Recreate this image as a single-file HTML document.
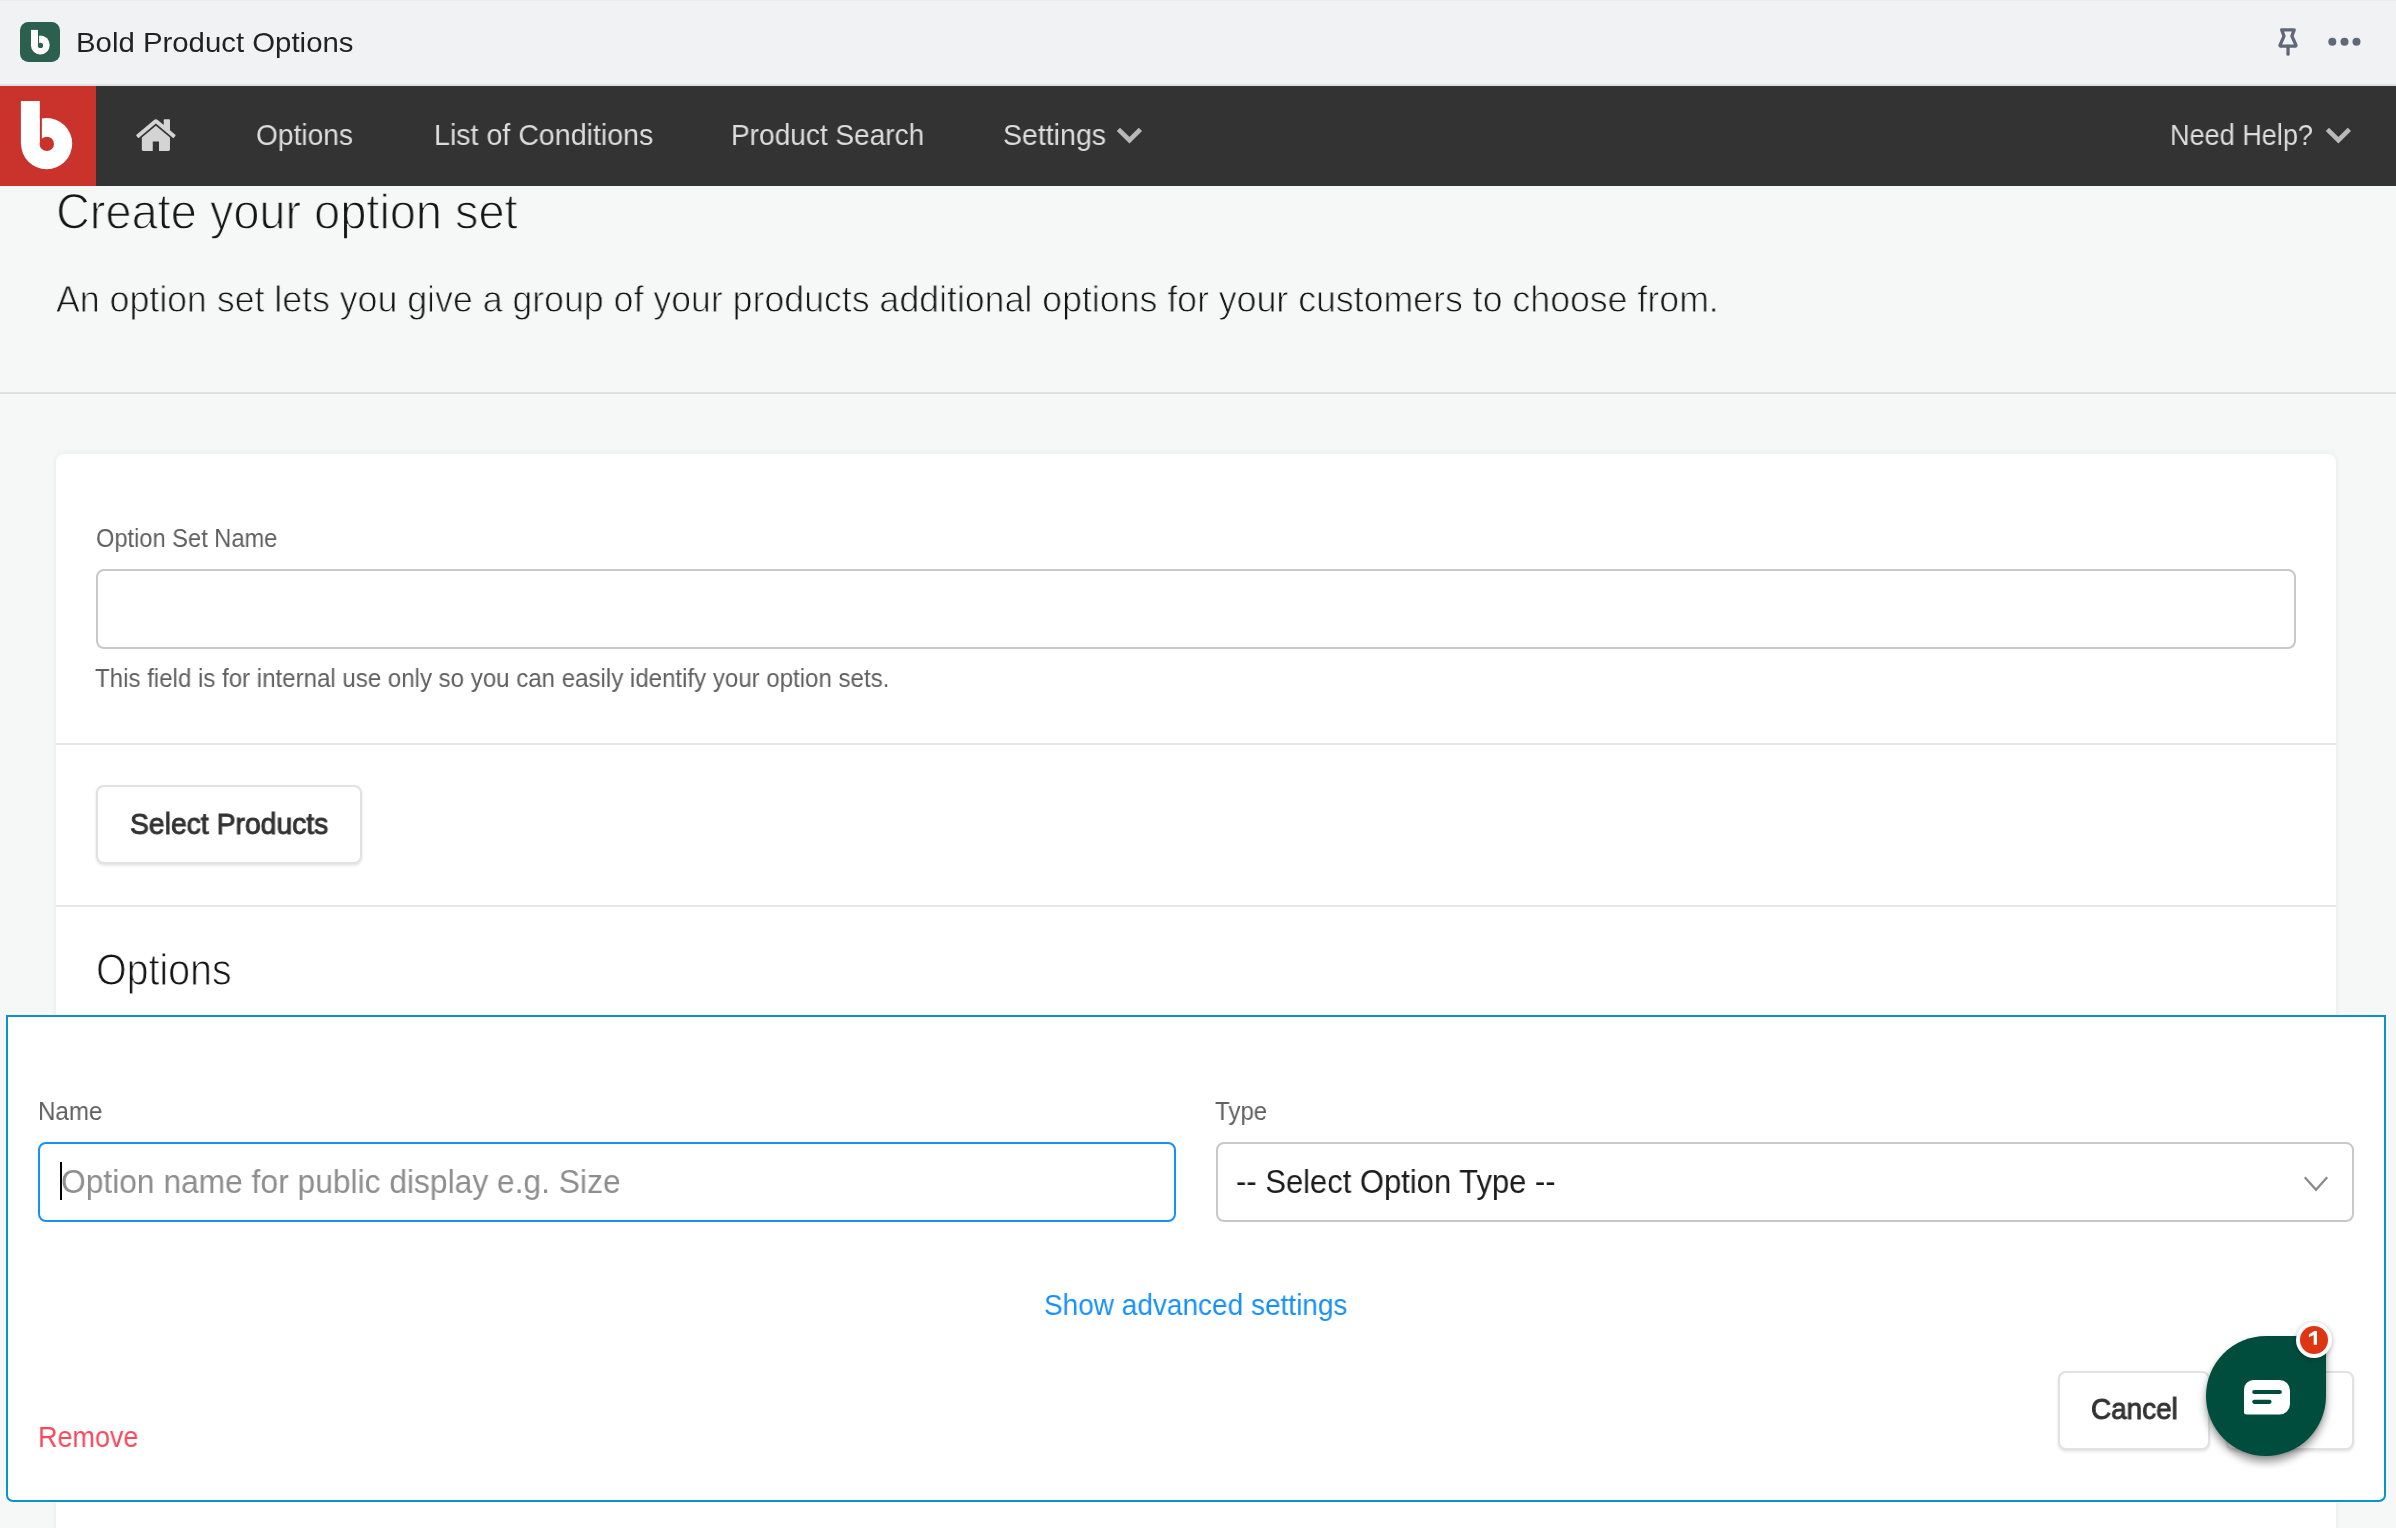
<!DOCTYPE html>
<html lang="en">
<head>
<meta charset="utf-8">
<title>Bold Product Options</title>
<style>
*{box-sizing:border-box;margin:0;padding:0}
html,body{width:2396px;height:1528px;overflow:hidden}
body{position:relative;background:#f6f8f8;font-family:"Liberation Sans",sans-serif;color:#212121}
.abs{position:absolute}
.t{position:absolute;white-space:nowrap;line-height:1;transform-origin:0 0;will-change:transform}
#topbar{left:0;top:0;width:2396px;height:86px;background:#f1f2f4}
#topline{left:0;top:0;width:2396px;height:1px;background:#e9eaec}
#appicon{left:20px;top:22px;width:40px;height:40px}
#nav{left:0;top:86px;width:2396px;height:100px;background:#333333}
#logo{left:0;top:86px;width:96px;height:100px;background:#c9332b}
.navt{color:#dcdcdc;font-size:27.5px;top:124px}
#hr1{left:0;top:392px;width:2396px;height:2px;background:#dde0e0}
#hr1b{left:0;top:394px;width:2396px;height:1px;background:#fbfcfc}
#card{left:56px;top:454px;width:2280px;height:1100px;background:#fff;border-radius:8px;box-shadow:0 0 6px rgba(0,0,0,.07)}
.lbl{color:#606060;font-size:23.5px}
#in1{left:96px;top:569px;width:2200px;height:80px;border:2px solid #c8c8c8;border-radius:8px;background:#fff}
.div{left:56px;width:2280px;height:2px;background:#e6e6e6}
.btn{background:#fff;border:2px solid #e2e2e2;border-radius:8px;box-shadow:0 2px 3px rgba(0,0,0,.09),0 0 2px rgba(0,0,0,.05)}
.btnt{color:#333;font-size:27.5px;-webkit-text-stroke:0.95px #333}
#panel{left:6px;top:1015px;width:2380px;height:487px;background:#fff;border:2px solid #0993ca;border-radius:0 0 7px 7px}
#in2{left:38px;top:1142px;width:1138px;height:80px;border:2px solid #1890f5;border-radius:8px;background:#fff}
#sel{left:1216px;top:1142px;width:1138px;height:80px;border:2px solid #c8c8c8;border-radius:8px;background:#fff}
#caret{left:60px;top:1162px;width:2px;height:38px;background:#000}
#chat{left:2206px;top:1336px;width:120px;height:120px;background:#004d3d;border-radius:60px 14px 60px 60px;box-shadow:0 6px 8px rgba(0,0,0,.40),0 1px 3px rgba(0,0,0,.12)}
#badge{left:2295.500px;top:1321.800px;width:36.600px;height:36.600px;border-radius:50%;background:#fff;box-shadow:0 1px 5px rgba(0,0,0,.30)}
#badge i{position:absolute;left:4.100px;top:4.100px;width:28.400px;height:28.400px;border-radius:50%;background:#de3612}
</style>
</head>
<body>
<!-- top app bar -->
<div id="topbar" class="abs"></div>
<div id="topline" class="abs"></div>
<div class="abs" style="left:0;top:84px;width:2396px;height:2px;background:#e0e1e5"></div>
<svg id="appicon" class="abs" viewBox="0 0 40 40" style="overflow:visible">
  <rect width="40" height="40" rx="8.300" fill="#2b5f4e"/>
  <circle cx="20.3" cy="23" r="9.4" fill="#fff"/>
  <rect x="11" y="7.9" width="7" height="15.5" fill="#fff"/>
  <rect x="18" y="7" width="1.1" height="16.5" fill="#2b5f4e"/>
  <circle cx="20.5" cy="23.4" r="2.6" fill="#2b5f4e"/>
</svg>
<span class="t" id="t_app" style="left:75.70px;top:28.55px;font-size:28.0px;transform:scaleX(1.0487);color:#1f2124">Bold Product Options</span>
<!-- pin -->
<svg class="abs" style="left:2274px;top:26px;width:28px;height:32px" viewBox="0 0 28 32">
  <path d="M7.700 3.850H20.200L17.900 10.100L21.600 18.300Q22.700 20.200 20.300 20.200H7.700Q5.300 20.200 6.400 18.300L10 10.100Z" fill="none" stroke="#5f6877" stroke-width="3.300" stroke-linejoin="round" stroke-linecap="round"/>
  <path d="M14.030 20.200V28.200" fill="none" stroke="#5f6877" stroke-width="3.300" stroke-linecap="round"/>
</svg>
<svg class="abs" style="left:2324.600px;top:34px;width:40px;height:16px" viewBox="0 0 40 16">
  <circle cx="7.300" cy="7.700" r="4" fill="#5f6877"/><circle cx="19.500" cy="7.700" r="4" fill="#5f6877"/><circle cx="31.500" cy="7.700" r="4" fill="#5f6877"/>
</svg>

<!-- nav -->
<div id="nav" class="abs"></div>
<div id="logo" class="abs"></div>
<svg class="abs" style="left:0;top:86px;width:96px;height:100px" viewBox="0 0 96 100">
  <circle cx="46.6" cy="57.6" r="25.6" fill="#fff"/>
  <rect x="20.9" y="15" width="19" height="43" fill="#fff"/>
  <rect x="39.9" y="14" width="2" height="44" fill="#c9332b"/>
  <circle cx="46.8" cy="57.9" r="7.2" fill="#c9332b"/>
</svg>
<svg class="abs" style="left:134.330px;top:112.650px;width:43.790px;height:44.380px" preserveAspectRatio="none" viewBox="0 0 1792 1792">
  <path fill="#d4d4d4" d="M1472 992v480q0 26-19 45t-45 19h-384v-384h-256v384h-384q-26 0-45-19t-19-45v-480q0-1 .5-3t.5-3l575-474 575 474q1 2 1 6zm223-69l-62 74q-8 9-21 11h-3q-13 0-21-7l-692-577-692 577q-12 8-24 7-13-2-21-11l-62-74q-8-10-7-23.500t11-21.500l719-599q32-26 76-26t76 26l244 204v-195q0-14 9-23t23-9h192q14 0 23 9t9 23v408l219 182q10 8 11 21.500t-7 23.500z"/>
</svg>
<span class="t navt" id="n1" style="left:256.43px;top:121.06px;font-size:29.0px;transform:scaleX(0.9704)">Options</span>
<span class="t navt" id="n2" style="left:433.53px;top:121.06px;font-size:29.0px;transform:scaleX(0.9858)">List of Conditions</span>
<span class="t navt" id="n3" style="left:731.47px;top:121.06px;font-size:29.0px;transform:scaleX(0.9668)">Product Search</span>
<span class="t navt" id="n4" style="left:1002.72px;top:121.06px;font-size:29.0px;transform:scaleX(0.9835)">Settings</span>
<svg class="abs" style="left:1115px;top:125px;width:30px;height:22px" viewBox="0 0 30 22">
  <path d="M3.400 4.400L14.500 15.200L25.400 4.400" fill="none" stroke="#b9b9b9" stroke-width="4.600"/>
</svg>
<span class="t navt" id="n5" style="left:2169.93px;top:121.06px;font-size:29.0px;transform:scaleX(0.9333)">Need Help?</span>
<svg class="abs" style="left:2323px;top:125px;width:30px;height:22px" viewBox="0 0 30 22">
  <path d="M4.400 4.400L15.400 15.200L26.400 4.400" fill="none" stroke="#b9b9b9" stroke-width="4.600"/>
</svg>

<!-- heading -->
<span class="t" id="h1" style="left:55.59px;top:187.15px;font-size:50.0px;transform:scaleX(0.9383);-webkit-text-stroke:1.3px #f6f8f8;color:#151515">Create your option set</span>
<span class="t" id="h2" style="left:56.05px;top:281.35px;font-size:37.5px;transform:scaleX(0.9519);-webkit-text-stroke:0.9px #f6f8f8;color:#141414">An option set lets you give a group of your products additional options for your customers to choose from.</span>
<div id="hr1" class="abs"></div>

<!-- card -->
<div id="card" class="abs"></div>
<span class="t lbl" id="l1" style="left:95.95px;top:525.90px;font-size:25.0px;transform:scaleX(0.9458)">Option Set Name</span>
<div id="in1" class="abs"></div>
<span class="t lbl" id="l2" style="left:95.34px;top:665.90px;font-size:25.0px;transform:scaleX(0.9624)">This field is for internal use only so you can easily identify your option sets.</span>
<div class="abs div" style="top:743px"></div>
<div class="abs btn" style="left:96px;top:785px;width:266px;height:79px"></div>
<span class="t btnt" id="b1" style="left:129.92px;top:810.20px;font-size:29.0px;transform:scaleX(0.9766)">Select Products</span>
<div class="abs div" style="top:905px"></div>
<span class="t" id="h3" style="left:95.92px;top:948.25px;font-size:44.0px;transform:scaleX(0.8939);-webkit-text-stroke:1.0px #fff;color:#141414">Options</span>

<!-- panel -->
<div id="panel" class="abs"></div>
<span class="t lbl" id="l3" style="left:37.57px;top:1098.85px;font-size:25.0px;transform:scaleX(0.9656)">Name</span>
<span class="t lbl" id="l4" style="left:1215.04px;top:1098.85px;font-size:25.0px;transform:scaleX(0.9615)">Type</span>
<div id="in2" class="abs"></div>
<div id="caret" class="abs"></div>
<span class="t" id="p1" style="left:60.58px;top:1165.30px;font-size:33.0px;transform:scaleX(0.9623);color:#8e8e8e">Option name for public display e.g. Size</span>
<div id="sel" class="abs"></div>
<span class="t" id="p2" style="left:1236.36px;top:1165.30px;font-size:33.0px;transform:scaleX(0.9385);color:#1c1c1c">-- Select Option Type --</span>
<svg class="abs" style="left:2300px;top:1172px;width:32px;height:24px" viewBox="0 0 32 24">
  <path d="M4.800 5.300l11.200 12.500L27.200 5.300" fill="none" stroke="#8a8a8a" stroke-width="2.300"/>
</svg>
<span class="t" id="a1" style="left:1044.33px;top:1290.60px;font-size:29.0px;transform:scaleX(0.9654);color:#1890fa">Show advanced settings</span>
<span class="t" id="r1" style="left:38.14px;top:1422.90px;font-size:29.0px;transform:scaleX(0.9305);color:#f7485c">Remove</span>
<div class="abs btn" style="left:2058px;top:1371px;width:152px;height:79px"></div>
<span class="t btnt" id="b2" style="left:2091.04px;top:1395.40px;font-size:29.0px;transform:scaleX(0.9614)">Cancel</span>
<div class="abs btn" style="left:2226px;top:1371px;width:128px;height:79px"></div>

<!-- chat -->
<div id="chat" class="abs"></div>
<svg class="abs" style="left:2240px;top:1376px;width:54px;height:42px" viewBox="0 0 54 42">
  <path d="M13.500 4h26a10.500 10.500 0 0 1 10.500 10.500v13.500a10.500 10.500 0 0 1-10.500 10.500H6.500a2.500 2.500 0 0 1-2.500-2.500V13.500a9.500 9.500 0 0 1 9.500-9.500z" fill="#fff"/>
  <path d="M14.300 16h25.500M14.300 25.800h15.200" stroke="#004d3d" stroke-width="4.200" stroke-linecap="round" fill="none"/>
</svg>
<div id="badge" class="abs"><i></i></div>
<svg class="abs" style="left:2307.100px;top:1330px;width:12px;height:16px" viewBox="0 0 12 16"><path d="M7.200 1.100H10V14.800H6.700V5L1.900 7.200V4.400Z" fill="#fff"/></svg>
</body>
</html>
